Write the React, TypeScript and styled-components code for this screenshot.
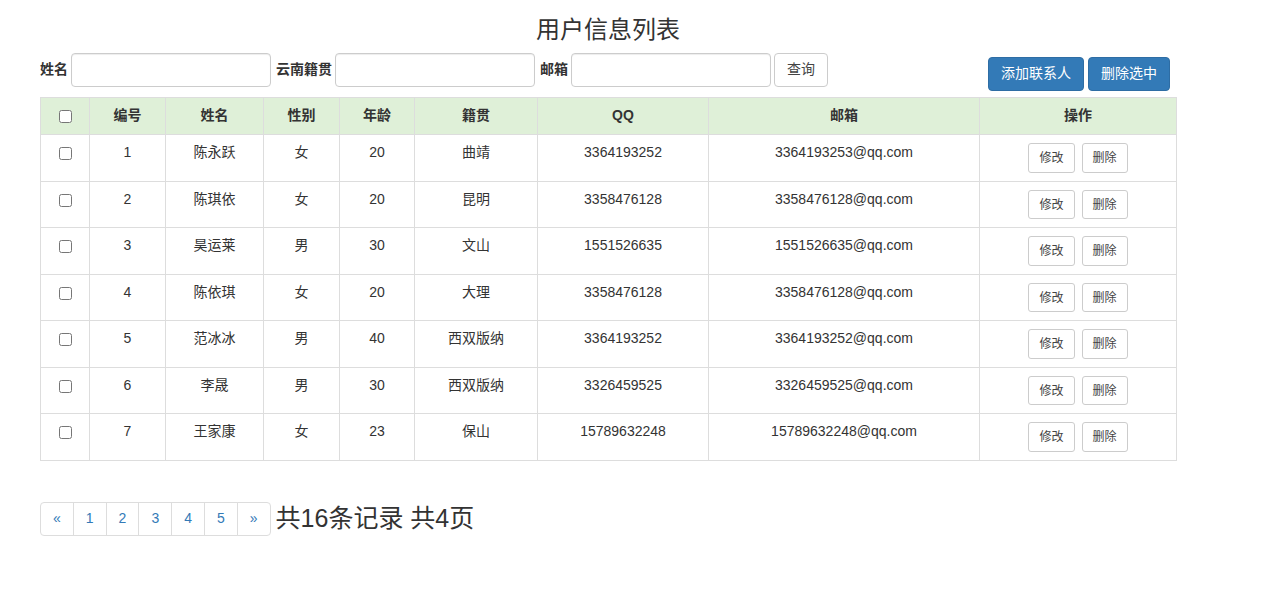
import styled, { createGlobalStyle } from "styled-components";

interface IUser {
  id: number;
  name: string;
  gender: string;
  age: number;
  address: string;
  qq: string;
  email: string;
}

const users: IUser[] = [
  { id: 1, name: "陈永跃", gender: "女", age: 20, address: "曲靖", qq: "3364193252", email: "3364193253@qq.com" },
  { id: 2, name: "陈琪依", gender: "女", age: 20, address: "昆明", qq: "3358476128", email: "3358476128@qq.com" },
  { id: 3, name: "昊运莱", gender: "男", age: 30, address: "文山", qq: "1551526635", email: "1551526635@qq.com" },
  { id: 4, name: "陈依琪", gender: "女", age: 20, address: "大理", qq: "3358476128", email: "3358476128@qq.com" },
  { id: 5, name: "范冰冰", gender: "男", age: 40, address: "西双版纳", qq: "3364193252", email: "3364193252@qq.com" },
  { id: 6, name: "李晟", gender: "男", age: 30, address: "西双版纳", qq: "3326459525", email: "3326459525@qq.com" },
  { id: 7, name: "王家康", gender: "女", age: 23, address: "保山", qq: "15789632248", email: "15789632248@qq.com" },
];

const columns = [
  { label: "", width: 49 },
  { label: "编号", width: 76 },
  { label: "姓名", width: 98 },
  { label: "性别", width: 76 },
  { label: "年龄", width: 75 },
  { label: "籍贯", width: 123 },
  { label: "QQ", width: 171 },
  { label: "邮箱", width: 271 },
  { label: "操作", width: 197 },
];

const pages = ["«", "1", "2", "3", "4", "5", "»"];

const App = () => {
  return (
    <>
      <GlobalStyle />
      <Container>
        <Title>用户信息列表</Title>
        <Toolbar>
          <SearchForm onSubmit={(e) => e.preventDefault()}>
            <Label>姓名</Label>
            <Input type="text" />
            <Label>云南籍贯</Label>
            <Input type="text" />
            <Label>邮箱</Label>
            <Input type="text" />
            <Button type="submit">查询</Button>
          </SearchForm>
          <Actions>
            <Button $primary>添加联系人</Button>
            <Button $primary>删除选中</Button>
          </Actions>
        </Toolbar>
        <Table>
          <colgroup>
            {columns.map((c, i) => (
              <col key={i} style={{ width: c.width }} />
            ))}
          </colgroup>
          <thead>
            <HeadRow>
              {columns.map((c, i) => (
                <Th key={i}>{i === 0 ? <Check type="checkbox" /> : c.label}</Th>
              ))}
            </HeadRow>
          </thead>
          <tbody>
            {users.map((u) => (
              <tr key={u.id}>
                <Td>
                  <Check type="checkbox" />
                </Td>
                <Td>{u.id}</Td>
                <Td>{u.name}</Td>
                <Td>{u.gender}</Td>
                <Td>{u.age}</Td>
                <Td>{u.address}</Td>
                <Td>{u.qq}</Td>
                <Td>{u.email}</Td>
                <Td>
                  <RowActions>
                    <Button $small>修改</Button>
                    <Button $small>删除</Button>
                  </RowActions>
                </Td>
              </tr>
            ))}
          </tbody>
        </Table>
        <Footer>
          <Pagination>
            {pages.map((p, i) => (
              <PageItem key={i} href="#">
                {p}
              </PageItem>
            ))}
          </Pagination>
          <Summary>共16条记录 共4页</Summary>
        </Footer>
      </Container>
    </>
  );
};

const GlobalStyle = createGlobalStyle`
  body {
    margin: 0;
    background: #ffffff;
    color: #333333;
    font-family: "Liberation Sans", "Noto Sans CJK SC", sans-serif;
    font-size: 14px;
    line-height: 1.42857;
  }
  * {
    box-sizing: border-box;
  }
`;

const Container = styled.div`
  width: 1136px;
  margin-left: 40px;
`;

const Title = styled.h3`
  margin: 17px 0 10px;
  font-size: 24px;
  font-weight: 400;
  line-height: 1.1;
  text-align: center;
  color: #333333;
`;

const Toolbar = styled.div`
  display: flex;
  justify-content: space-between;
  align-items: flex-start;
  margin-bottom: 6px;
`;

const SearchForm = styled.form`
  display: flex;
  align-items: center;
`;

const Label = styled.label`
  font-weight: bold;
  margin-right: 3px;
  & + input {
    margin-right: 5px;
  }
`;

const Input = styled.input`
  width: 200px;
  height: 34px;
  padding: 6px 12px;
  border: 1px solid #cccccc;
  border-radius: 4px;
  box-shadow: inset 0 1px 1px rgba(0, 0, 0, 0.075);
  font-size: 14px;
  color: #555555;
  &:last-of-type {
    margin-right: 3px;
  }
`;

const Button = styled.button<{ $primary?: boolean; $small?: boolean }>`
  display: inline-block;
  height: ${(p) => (p.$small ? "29.5px" : "34px")};
  padding: ${(p) => (p.$small ? "4px 10px" : "6px 12px")};
  font-family: inherit;
  font-size: ${(p) => (p.$small ? "12px" : "14px")};
  line-height: ${(p) => (p.$small ? "1.5" : "1.42857")};
  border-radius: ${(p) => (p.$small ? "3px" : "4px")};
  border: 1px solid ${(p) => (p.$primary ? "#2e6da4" : "#cccccc")};
  background: ${(p) => (p.$primary ? "#337ab7" : "#ffffff")};
  color: ${(p) => (p.$primary ? "#ffffff" : "#444444")};
  cursor: pointer;
  white-space: nowrap;
`;

const Actions = styled.div`
  display: flex;
  gap: 4px;
  margin-top: 4px;
  margin-right: 6px;
`;

const Table = styled.table`
  width: 1136px;
  table-layout: fixed;
  border-collapse: collapse;
  border: 1px solid #dddddd;
  margin-bottom: 40px;
`;

const HeadRow = styled.tr`
  background: #dff0d8;
`;

const Th = styled.th`
  padding: 8px;
  border: 1px solid #dddddd;
  text-align: center;
  vertical-align: bottom;
  font-weight: bold;
  line-height: 1.42857;
`;

const Td = styled.td`
  padding: 8px 8px 8px;
  border: 1px solid #dddddd;
  text-align: center;
  vertical-align: top;
  line-height: 1.42857;
`;

const Check = styled.input`
  margin: 4px 0 0;
  width: 13px;
  height: 13px;
  vertical-align: top;
`;

const RowActions = styled.div`
  display: flex;
  justify-content: center;
  gap: 7px;
`;

const Footer = styled.div`
  display: flex;
  align-items: center;
  gap: 5px;
`;

const Pagination = styled.nav`
  display: flex;
`;

const PageItem = styled.a`
  display: block;
  padding: 6px 12px;
  line-height: 1.42857;
  color: #337ab7;
  text-decoration: none;
  background: #ffffff;
  border: 1px solid #dddddd;
  margin-left: -1px;
  &:first-child {
    margin-left: 0;
    border-radius: 4px 0 0 4px;
  }
  &:last-child {
    border-radius: 0 4px 4px 0;
  }
`;

const Summary = styled.span`
  font-size: 25px;
  color: #333333;
`;

export default App;
